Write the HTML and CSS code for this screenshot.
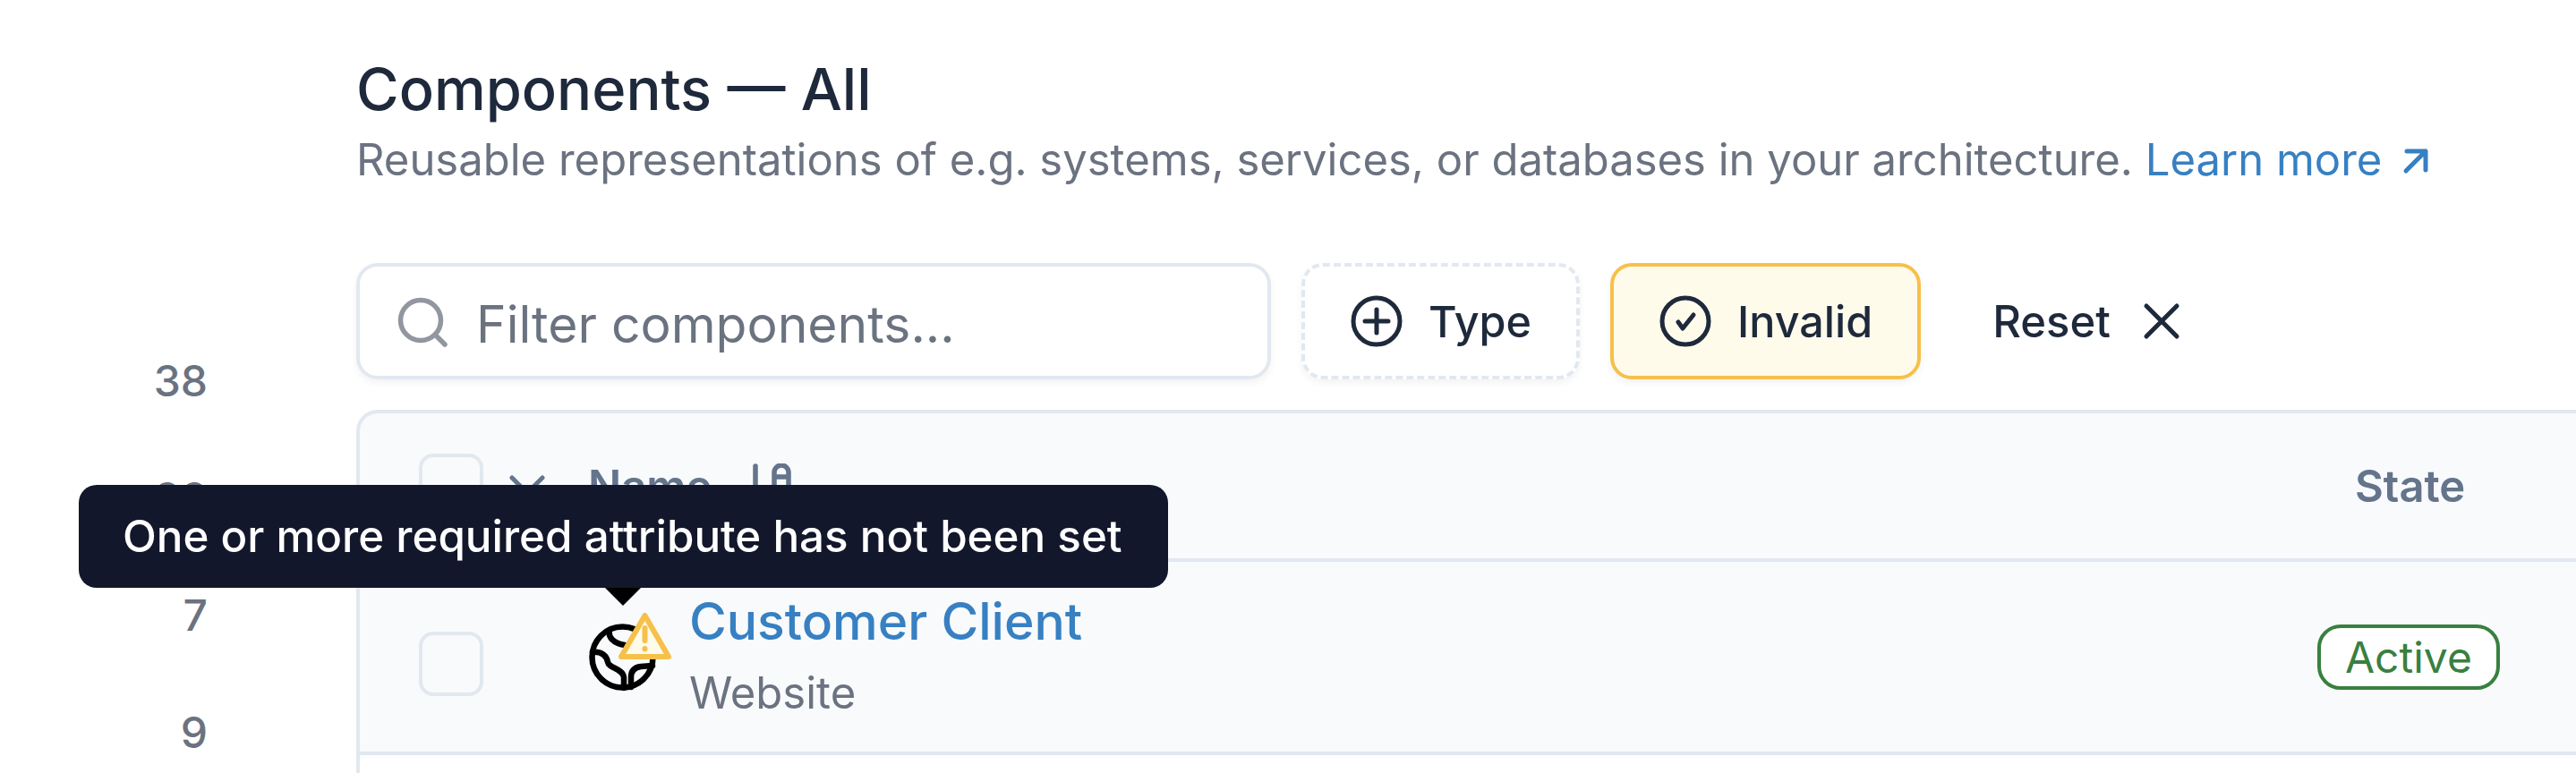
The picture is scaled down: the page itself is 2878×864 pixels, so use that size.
FILE: index.html
```html
<!DOCTYPE html>
<html lang="en">
<head>
<meta charset="UTF-8">
<meta name="viewport" content="width=device-width, initial-scale=1.0">
<title>Components</title>
<link rel="stylesheet" href="styles.css">
</head>
<body>
<div class="page">
  <div class="counts">
    <span>38</span>
    <span>33</span>
    <span>7</span>
    <span>9</span>
  </div>

  <div class="main">
    <h1 class="title">Components — All</h1>
    <p class="subtitle">Reusable representations of e.g. systems, services, or databases in your architecture. <a class="learn" href="#">Learn more
      <svg class="learn-icon" viewBox="0 0 32 32" fill="none" stroke="currentColor" stroke-width="5" stroke-linecap="round" stroke-linejoin="round"><path d="M5 27 27 5M6 5h21v21"/></svg></a></p>

    <div class="filters">
      <div class="search">
        <svg class="search-icon" viewBox="0 0 56 56" fill="none" stroke="#9196a0" stroke-width="5.5" stroke-linecap="round"><circle cx="26" cy="26" r="22.5"/><path d="M43 43 53 53"/></svg>
        <span class="search-text">Filter components...</span>
      </div>
      <div class="chip chip-dashed">
        <svg class="chip-icon" viewBox="0 0 60 60" fill="none" stroke="#1e293b" stroke-width="5" stroke-linecap="round" stroke-linejoin="round"><circle cx="30" cy="30" r="26"/><path d="M30 17v26M17 30h26"/></svg>
        Type
      </div>
      <div class="chip chip-active">
        <svg class="chip-icon" viewBox="0 0 60 60" fill="none" stroke="#1e293b" stroke-width="5" stroke-linecap="round" stroke-linejoin="round"><circle cx="30" cy="30" r="26"/><path d="M22 31l5 7 12-15"/></svg>
        Invalid
      </div>
      <div class="reset">
        Reset
        <svg class="reset-icon" viewBox="0 0 42 42" fill="none" stroke="#1e293b" stroke-width="5" stroke-linecap="round"><path d="M4 4 38 38M38 4 4 38"/></svg>
      </div>
    </div>

    <div class="table">
      <div class="row row-head">
        <div class="cell-check"><span class="checkbox"></span></div>
        <svg class="head-chevron" viewBox="0 0 40 24" fill="none" stroke="#64748b" stroke-width="5" stroke-linecap="round" stroke-linejoin="round"><path d="M3 3 20 20 37 3"/></svg>
        <div class="head-name">Name
          <svg class="sort-icon" viewBox="0 0 50 50" fill="none" stroke="#64748b" stroke-width="5.5" stroke-linecap="round" stroke-linejoin="round"><path d="M6 3v44M27 24V10a8 8 0 0 1 16 0v14M27 15h16"/></svg>
        </div>
        <div class="cell-state head-state">State</div>
      </div>
      <div class="row row-body">
        <div class="cell-check"><span class="checkbox checkbox-row"></span></div>
        <div class="type-icon">
          <svg class="globe" viewBox="0 0 75 75" fill="none" stroke="#000" stroke-width="6.5" stroke-linecap="round" stroke-linejoin="round"><circle cx="37.5" cy="37.5" r="34"/><path d="M23 7C21 15 27 22 40 24M4 32C14 31 20 36 21 43 22 50 38 50 39 60V72M71 47 58 48C50 49 47 54 47 60V71"/></svg>
          <svg class="warning" viewBox="0 0 61 55" stroke="#f6c04a" stroke-width="6" stroke-linecap="round" stroke-linejoin="round"><path fill="#fffbeb" d="M30.5 4 57 50H4z"/><path fill="none" d="M30.5 18v14"/><path fill="none" d="M30.5 41v.5"/></svg>
          <div class="tooltip">One or more required attribute has not been set</div>
        </div>
        <div class="name">
          <a class="name-link" href="#">Customer Client</a>
          <span class="name-type">Website</span>
        </div>
        <div class="cell-state"><span class="badge">Active</span></div>
      </div>
      <div class="table-rest"></div>
    </div>
  </div>
</div>
</body>
</html>
```

FILE: styles.css
```css
html, body {
  margin: 0;
  padding: 0;
  height: 100%;
  overflow: hidden;
  background-color: #fff;
}

body {
  font-family: Inter, "Noto Sans", sans-serif;
}

.page {
  display: flex;
  height: 864px;
}

.counts {
  width: 232px;
  flex-shrink: 0;
  padding-top: 398px;
  display: flex;
  flex-direction: column;
  align-items: flex-end;
  gap: 75px;
  font-size: 48px;
  line-height: 56px;
  font-weight: 500;
  color: #6b7280;
}

.main {
  margin-left: 166px;
  flex: 1;
  min-width: 0;
  padding-top: 60px;
}

.title {
  margin: 0;
  font-size: 65px;
  line-height: 80px;
  font-weight: 550;
  color: #1e293b;
}

.subtitle {
  margin: 7px 0 0;
  font-size: 49px;
  line-height: 64px;
  color: #6b7280;
}

.learn {
  color: #3780c2;
  text-decoration: none;
}

.learn-icon {
  width: 32px;
  height: 32px;
  margin-left: 8px;
}

.filters {
  display: flex;
  align-items: stretch;
  gap: 34px;
  height: 130px;
  margin-top: 83px;
}

.search {
  width: 1022px;
  box-sizing: border-box;
  border: 4px solid #e2e8f0;
  border-radius: 24px;
  box-shadow: 0 4px 8px rgba(15, 23, 42, 0.05);
  display: flex;
  align-items: center;
  padding-left: 42px;
  gap: 32px;
  font-size: 57px;
  color: #6b7280;
}

.search-icon {
  width: 56px;
  height: 56px;
  margin-top: 2px;
}

.search-text {
  padding-top: 6px;
}

.chip {
  box-sizing: border-box;
  display: flex;
  align-items: center;
  gap: 28px;
  padding: 0 50px;
  border-radius: 24px;
  font-size: 48.5px;
  font-weight: 500;
  color: #1e293b;
  box-shadow: 0 4px 8px rgba(15, 23, 42, 0.05);
}

.chip-icon {
  width: 60px;
  height: 60px;
}

.chip-dashed {
  border: 4px dashed #e2e8f0;
}

.chip-active {
  border: 4px solid #f6c04a;
  background-color: #fffbeb;
}

.reset {
  display: flex;
  align-items: center;
  gap: 36px;
  margin-left: 46px;
  font-size: 49px;
  font-weight: 500;
  color: #1e293b;
}

.reset-icon {
  width: 42px;
  height: 42px;
}

.table {
  margin-top: 34px;
}

.table-rest {
  height: 40px;
  border-left: 4px solid #e2e8f0;
}

.row {
  display: flex;
  align-items: center;
  background-color: #f8fafc;
  border-left: 4px solid #e2e8f0;
  border-bottom: 4px solid #e2e8f0;
  box-sizing: border-box;
}

.row-head {
  height: 170px;
  border-top: 4px solid #e2e8f0;
  border-top-left-radius: 24px;
  color: #64748b;
  font-size: 49px;
  font-weight: 600;
}

.row-body {
  height: 216px;
}

.cell-check {
  width: 66px;
  padding-left: 66px;
  margin-right: 20px;
  flex-shrink: 0;
}

.checkbox {
  display: block;
  box-sizing: border-box;
  width: 72px;
  height: 72px;
  border: 4px solid #e2e8f0;
  border-radius: 16px;
}

.checkbox-row {
  margin-top: 16px;
}

.head-chevron {
  width: 40px;
  height: 24px;
  margin-left: 15px;
}

.head-name {
  margin-left: 48px;
  display: flex;
  align-items: center;
  gap: 43px;
}

.sort-icon {
  width: 50px;
  height: 50px;
}

.cell-state {
  margin-left: auto;
  width: 289px;
  flex-shrink: 0;
}

.head-state {
  padding-left: 42px;
  box-sizing: border-box;
}

.type-icon {
  position: relative;
  width: 75px;
  height: 75px;
  margin-left: 104px;
}

.globe {
  display: block;
  width: 75px;
  height: 75px;
}

.warning {
  position: absolute;
  left: 32px;
  top: -13px;
  width: 61px;
  height: 55px;
}

.tooltip {
  position: absolute;
  left: -570px;
  top: -155px;
  box-sizing: border-box;
  width: 1217px;
  height: 115px;
  padding-left: 49px;
  display: flex;
  align-items: center;
  border-radius: 20px;
  background-color: #12172b;
  color: #fff;
  font-size: 49.3px;
  font-weight: 500;
  white-space: nowrap;
}

.tooltip::after {
  content: "";
  position: absolute;
  left: 588px;
  bottom: -20px;
  border-left: 20px solid transparent;
  border-right: 20px solid transparent;
  border-top: 20px solid #000;
}

.name {
  display: flex;
  flex-direction: column;
  margin-left: 37px;
  margin-bottom: 2px;
}

.name-link {
  font-size: 57px;
  line-height: 72px;
  font-weight: 500;
  color: #3780c2;
  text-decoration: none;
}

.name-type {
  margin-top: 12px;
  font-size: 49px;
  line-height: 64px;
  color: #6b7280;
}

.badge {
  display: inline-block;
  box-sizing: border-box;
  height: 73px;
  line-height: 65px;
  padding: 0 27px;
  border: 4px solid #38803f;
  border-radius: 26px;
  background-color: #fff;
  color: #38803f;
  font-size: 48px;
}
```
